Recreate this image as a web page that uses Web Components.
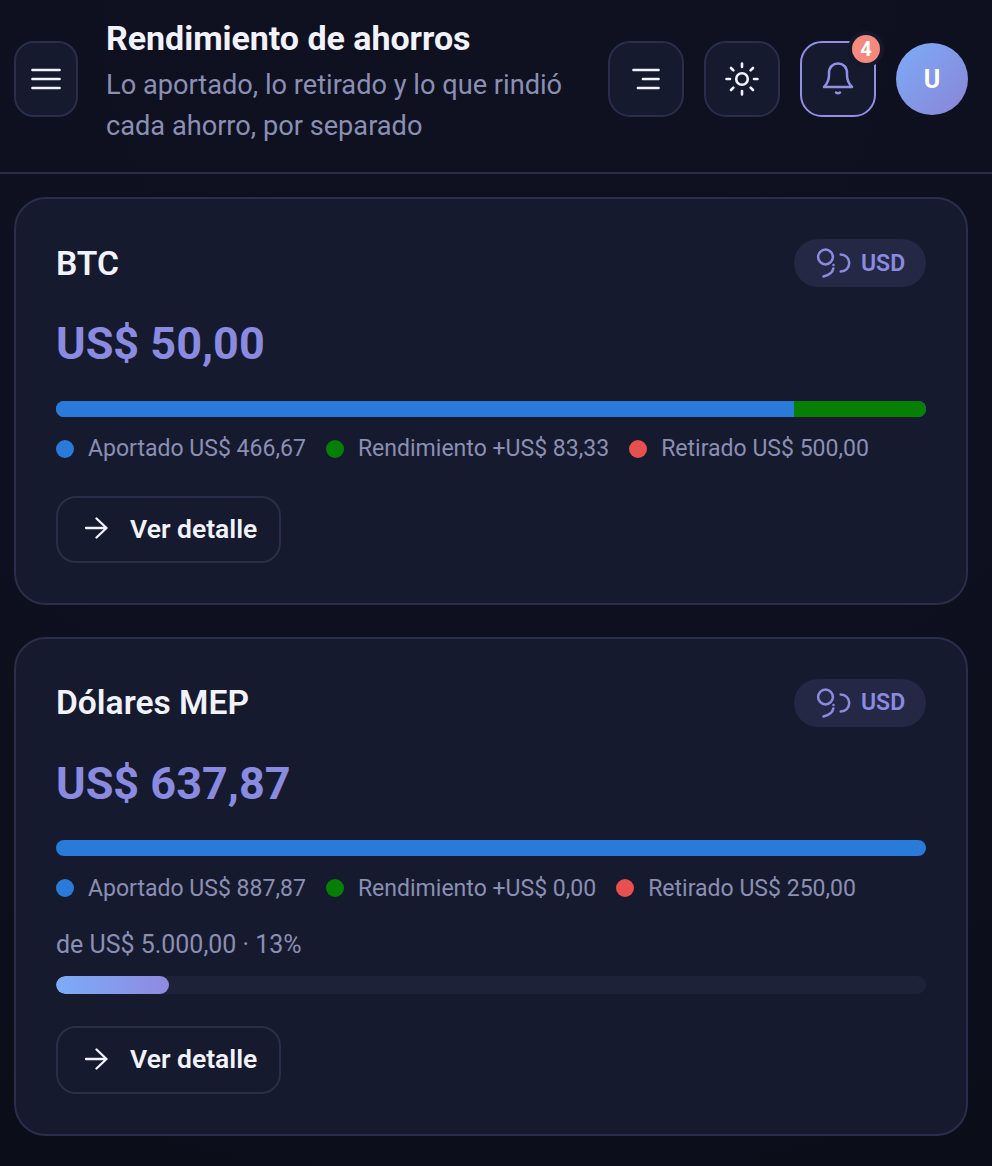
<!DOCTYPE html>
<html lang="es">
<head>
<meta charset="utf-8">
<title>Rendimiento de ahorros</title>
<style>
  html, body { margin: 0; background: #0d0f1d; }
  body { font-family: Roboto, "Liberation Sans", sans-serif; color: #f1f2fb; width: 992px; height: 1166px; overflow: hidden;
    background: radial-gradient(circle at 50% 0, #0f1121 0, #0e101f 55%, #0b0d19 100%); }
  .cards { display: flex; flex-direction: column; gap: 32px; padding: 23px 24px 30px 14px; }
</style>
</head>
<body>
<app-header heading="Rendimiento de ahorros" sub="Lo aportado, lo retirado y lo que rindió cada ahorro, por separado"></app-header>
<div class="cards">
  <saving-card name="BTC" amount="US$ 50,00" aportado="466,67" rendimiento="83,33" retirado="500,00" share="84.8"></saving-card>
  <saving-card name="Dólares MEP" amount="US$ 637,87" aportado="887,87" rendimiento="0,00" retirado="250,00" share="100" goal="de US$ 5.000,00 · 13%" goal-pct="13"></saving-card>
</div>

<script>
class IconButton extends HTMLElement {
  constructor() {
    super();
    this.attachShadow({mode: 'open'}).innerHTML = `
    <style>
      :host { display: flex; align-items: center; justify-content: center; position: relative; box-sizing: border-box;
        width: 76px; height: 76px; flex: none; border: 2px solid #2a2e4a; border-radius: 22px; background: #161a2e; }
      :host([narrow]) { width: 64px; border-radius: 20px; }
      :host([active]) { border-color: #8f90e6; }
    </style>
    <slot></slot>`;
  }
}
customElements.define('icon-button', IconButton);

class AppHeader extends HTMLElement {
  constructor() {
    super();
    this.attachShadow({mode: 'open'});
  }
  connectedCallback() {
    this.shadowRoot.innerHTML = `
    <style>
      :host { display: flex; box-sizing: border-box; height: 174px; padding: 12px 24px 26px 14px; align-items: center; gap: 20px;
        border-bottom: 2px solid #2a2e4a; }
      .text { flex: 1; margin-left: 8px; }
      h1 { margin: 0; font-size: 34px; line-height: 53px; font-weight: 700; color: #f1f2fb; letter-spacing: -0.04px; }
      p { margin: 0; font-size: 27.2px; line-height: 40.8px; color: #8b8fb3; width: 470px; }
      svg { display: block; }
      .badge { position: absolute; top: -8px; right: -6px; width: 28px; height: 28px; border-radius: 50%; background: #f4897d;
        box-shadow: 0 0 0 4px #14182c; color: #fff; font-size: 20px; font-weight: 700; display: flex; align-items: center; justify-content: center; }
      .avatar { width: 72px; height: 72px; flex: none; border-radius: 50%; background: linear-gradient(135deg, #7cacf8, #8a84d6);
        color: #fff; font-size: 25px; font-weight: 700; display: flex; align-items: center; justify-content: center; }
    </style>
    <icon-button narrow>
      <svg width="30" height="22" viewBox="0 0 30 22" fill="none" stroke="#f1f2fb" stroke-width="2.700" stroke-linecap="round"><path d="M1.500 2h27M1.500 11h27M1.500 20h27"/></svg>
    </icon-button>
    <div class="text">
      <h1>${this.getAttribute('heading')}</h1>
      <p>${this.getAttribute('sub')}</p>
    </div>
    <icon-button>
      <svg width="28" height="22" viewBox="0 0 28 22" fill="none" stroke="#f1f2fb" stroke-width="2.700" stroke-linecap="round"><path d="M1.500 2h25M11 11h15.500M6 20h20.500"/></svg>
    </icon-button>
    <icon-button>
      <svg width="36" height="36" viewBox="0 0 36 36" fill="none" stroke="#f1f2fb" stroke-width="2.600" stroke-linecap="round"><circle cx="18" cy="18" r="5.800"/><path d="M18 2.500v3.500M18 30v3.500M2.500 18h3.500M30 18h3.500M7 7l2.400 2.400M26.600 26.600l2.400 2.400M7 29l2.400-2.400M26.600 9.400l2.400-2.400"/></svg>
    </icon-button>
    <icon-button active>
      <svg width="32" height="34" viewBox="0 0 32 34" fill="none" stroke="#8f90e6" stroke-width="2.500" stroke-linecap="round" stroke-linejoin="round"><path d="M2 25h28c-3-3-5-6-5-12v-2c0-6-4-9.500-9-9.500s-9 3.500-9 9.500v2c0 6-2 9-5 12z"/><path d="M14 30.500c1.300 1 2.700 1 4 0"/></svg>
      <span class="badge">4</span>
    </icon-button>
    <div class="avatar">U</div>`;
  }
}
customElements.define('app-header', AppHeader);

class SavingCard extends HTMLElement {
  constructor() {
    super();
    this.attachShadow({mode: 'open'});
  }
  connectedCallback() {
    let a = (n) => this.getAttribute(n);
    let goal = a('goal') ? `
      <div class="goal">${a('goal')}</div>
      <div class="track"><div class="fill" style="width:${a('goal-pct')}%"></div></div>` : '';
    this.shadowRoot.innerHTML = `
    <style>
      :host { display: block; box-sizing: border-box; padding: 40px 40px 39.6px; border: 2px solid #2a2e4a; border-radius: 32px; background: #161a2e; }
      :host([goal]) { padding-bottom: 40.5px; }
      .top { display: flex; justify-content: space-between; align-items: center; height: 48px; }
      h2 { margin: 0; font-size: 33.6px; font-weight: 600; color: #f1f2fb; }
      .pill { display: flex; align-items: center; gap: 10px; box-sizing: border-box; height: 48px; width: 132px; padding-left: 22px; border-radius: 24px; background: #252845;
        color: #8a8be0; font-size: 23px; font-weight: 600; }
      .amount { margin-top: 27px; font-size: 45px; line-height: 59.6px; font-weight: 700; color: #8a8be0; }
      .bar { display: flex; height: 16px; margin-top: 27px; border-radius: 8px; overflow: hidden; background: #2a7bd9; }
      .bar i { display: block; height: 100%; }
      .legend { display: flex; gap: 20px; margin-top: 16.2px; margin-bottom: -0.2px; height: 32px; align-items: center; font-size: 23.04px; color: #8b8fb3; }
      .legend span { display: flex; align-items: center; gap: 14px; }
      .legend b { width: 18px; height: 18px; border-radius: 50%; display: block; }
      .goal { margin-top: 25px; height: 32px; line-height: 32px; font-size: 24.96px; color: #8b8fb3; }
      .track { margin-top: 15px; margin-bottom: 1px; height: 18px; border-radius: 9px; background: #1e2238; overflow: hidden; }
      .fill { height: 100%; border-radius: 9px; background: linear-gradient(90deg, #7cacf8, #8f8adf); }
      .btn { display: inline-flex; align-items: center; gap: 22px; box-sizing: border-box; height: 67.4px; margin-top: 31px; padding: 0 22px 2px 26px; border: 2px solid #2a2e4a; border-radius: 20px;
        font-size: 26.5px; font-weight: 600; color: #f1f2fb; }
      svg { display: block; }
    </style>
    <div class="top">
      <h2>${a('name')}</h2>
      <div class="pill">
        <svg width="35" height="30" viewBox="0 0 35 30" fill="none" stroke="#8a8be0" stroke-width="2.500" stroke-linecap="round"><circle cx="9.500" cy="9" r="7.400"/><path d="M17.500 17v.1M17.300 20.500c-.6 3.500-4 6.500-9.800 8M24.700 6.500a8.500 8.500 0 0 1 0 17"/></svg>
        USD
      </div>
    </div>
    <div class="amount">${a('amount')}</div>
    <div class="bar"><i style="width:${a('share')}%;background:#2a7bd9"></i><i style="flex:1;background:#058005"></i></div>
    <div class="legend">
      <span><b style="background:#2a7bd9"></b>Aportado US$ ${a('aportado')}</span>
      <span><b style="background:#058005"></b>Rendimiento +US$ ${a('rendimiento')}</span>
      <span><b style="background:#e84f4f"></b>Retirado US$ ${a('retirado')}</span>
    </div>
    ${goal}
    <div class="btn">
      <svg width="24" height="22" viewBox="0 0 24 22" fill="none" stroke="#f1f2fb" stroke-width="2.300" stroke-linecap="round" stroke-linejoin="round"><path d="M2 11h20.500M12.500 1.500l10 9.500-10 9.500"/></svg>
      Ver detalle
    </div>`;
  }
}
customElements.define('saving-card', SavingCard);
</script>
</body>
</html>
